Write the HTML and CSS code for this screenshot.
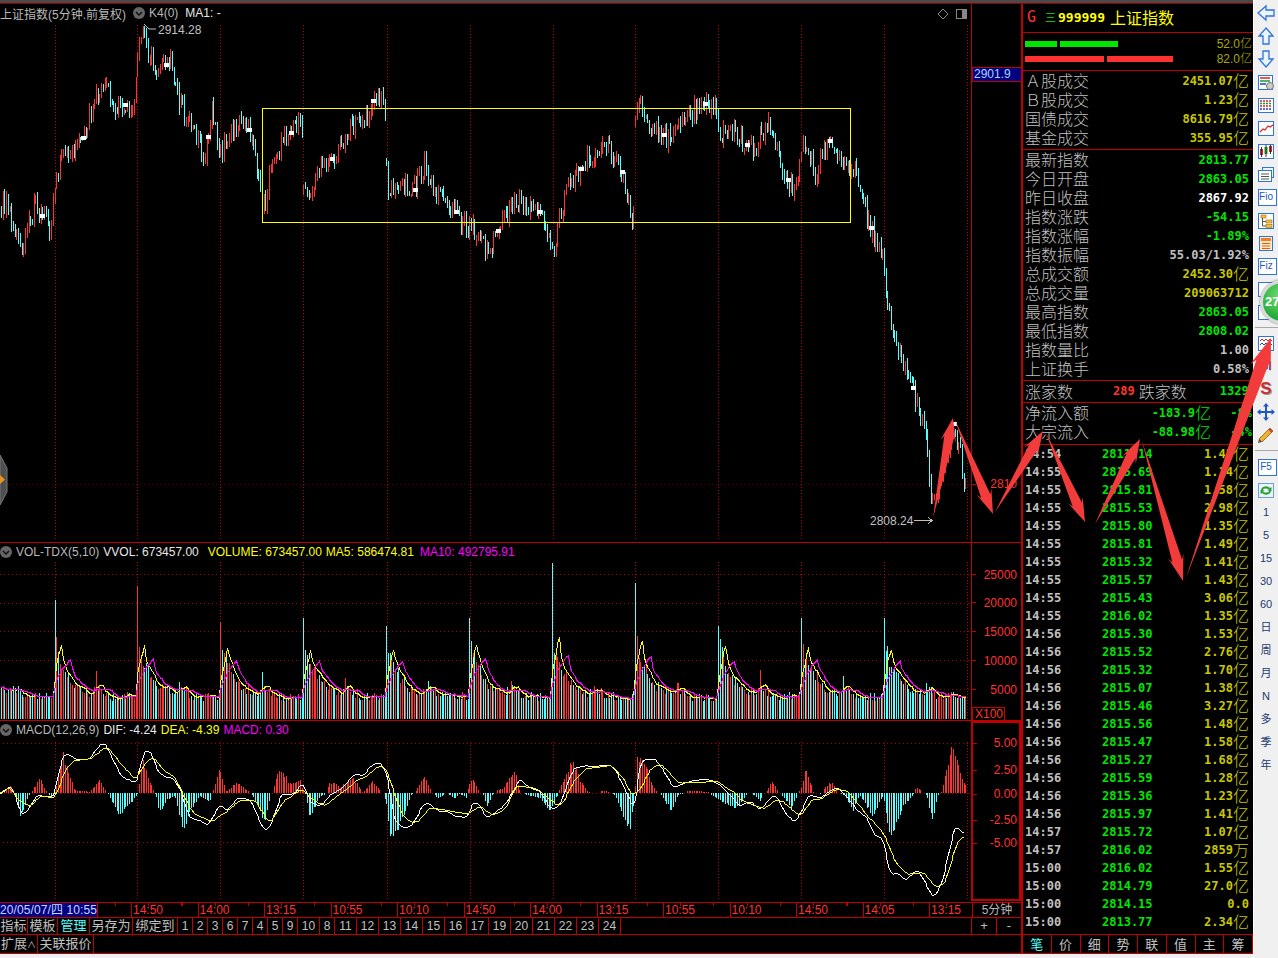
FILE: index.html
```html
<!DOCTYPE html>
<html lang="zh-CN">
<head>
  <meta charset="UTF-8" />
  <title>上证指数</title>
  <link rel="stylesheet" href="styles.css">
</head>
<body>
<div class="app">
  <div class="terminal">
    <div class="top-strip"></div>
    <div class="workspace">

      <!-- K线 / 量 / MACD -->
      <div class="charts">
        <div class="pane pane-price" id="pricePane">
          <div class="pane-head">
            <span class="grey cjk">上证指数(5分钟.前复权)</span>
            <svg class="chevron" viewBox="0 0 12 12"><circle cx="6" cy="6" r="6" fill="#666"/><path d="M3 5l3 3 3-3" fill="none" stroke="#111" stroke-width="1.5"/></svg>
            <span class="grey">K4(0)</span>
            <span class="white">MA1: -</span>
          </div>
        </div>
        <div class="pane pane-vol" id="volPane">
          <div class="pane-head">
            <svg class="chevron" viewBox="0 0 12 12"><circle cx="6" cy="6" r="6" fill="#666"/><path d="M3 5l3 3 3-3" fill="none" stroke="#111" stroke-width="1.5"/></svg>
            <span class="grey">VOL-TDX(5,10)</span>
            <span class="white">VVOL: 673457.00</span>
            <span class="yellow push-5">VOLUME: 673457.00</span>
            <span class="yellow">MA5: 586474.81</span>
            <span class="magenta push-2">MA10: 492795.91</span>
          </div>
        </div>
        <div class="pane pane-macd" id="macdPane">
          <div class="pane-head">
            <svg class="chevron" viewBox="0 0 12 12"><circle cx="6" cy="6" r="6" fill="#666"/><path d="M3 5l3 3 3-3" fill="none" stroke="#111" stroke-width="1.5"/></svg>
            <span class="grey">MACD(12,26,9)</span>
            <span class="white">DIF: -4.24</span>
            <span class="yellow">DEA: -4.39</span>
            <span class="magenta">MACD: 0.30</span>
          </div>
        </div>

        <div class="time-axis">
          <div class="time-now">20/05/07/四 10:55</div>
          <div class="time-gap"></div>
          <div class="time-cell">14:50</div>
          <div class="time-cell">14:00</div>
          <div class="time-cell">13:15</div>
          <div class="time-cell">10:55</div>
          <div class="time-cell">10:10</div>
          <div class="time-cell">14:50</div>
          <div class="time-cell">14:00</div>
          <div class="time-cell">13:15</div>
          <div class="time-cell">10:55</div>
          <div class="time-cell">10:10</div>
          <div class="time-cell">14:50</div>
          <div class="time-cell">14:05</div>
          <div class="time-cell time-last">13:15</div>
          <div class="time-unit">5分钟</div>
        </div>

        <div class="tab-row">
          <span class="tab w28">指标</span>
          <span class="tab w30">模板</span>
          <span class="tab w32 active">管理</span>
          <span class="tab w43">另存为</span>
          <span class="tab w45">绑定到</span>
          <span class="tab n1">1</span><span class="tab n1">2</span><span class="tab n1">3</span><span class="tab n1">6</span><span class="tab n1">7</span><span class="tab n1">4</span><span class="tab n1">5</span><span class="tab n1">9</span>
          <span class="tab n2">10</span><span class="tab n1">8</span>
          <span class="tab n2">11</span><span class="tab n2">12</span><span class="tab n2">13</span><span class="tab n2">14</span><span class="tab n2">15</span><span class="tab n2">16</span><span class="tab n2">17</span><span class="tab n2">19</span><span class="tab n2">20</span><span class="tab n2">21</span><span class="tab n2">22</span><span class="tab n2">23</span><span class="tab n2">24</span>
          <span class="tab-fill"></span>
          <span class="tab-btn">+</span>
          <span class="tab-btn">-</span>
        </div>

        <div class="tab-row tab-row-last">
          <span class="tab w38">扩展<small class="caret">∧</small></span>
          <span class="tab w56">关联报价</span>
        </div>
      </div>

      <!-- 行情 -->
      <div class="quote">
        <div class="q-title">
          <span class="q-g">G</span>
          <span class="q-menu">三</span>
          <span class="q-code">999999</span>
          <span class="q-name">上证指数</span>
        </div>

        <div class="q-bars">
          <div class="bar-row">
            <i class="bar green" style="width:32px"></i><i class="bar green" style="width:58px"></i>
            <span class="bar-val">52.0<i class="unit">亿</i></span>
          </div>
          <div class="bar-row">
            <i class="bar red" style="width:79px"></i><i class="bar red" style="width:66px"></i>
            <span class="bar-val">82.0<i class="unit">亿</i></span>
          </div>
        </div>

        <div class="q-section sec-4">
          <div class="q-row"><span class="lbl">Ａ股成交</span><span class="val c-y">2451.07<i class="unit">亿</i></span></div>
          <div class="q-row"><span class="lbl">Ｂ股成交</span><span class="val c-y">1.23<i class="unit">亿</i></span></div>
          <div class="q-row"><span class="lbl">国债成交</span><span class="val c-y">8616.79<i class="unit">亿</i></span></div>
          <div class="q-row"><span class="lbl">基金成交</span><span class="val c-y">355.95<i class="unit">亿</i></span></div>
        </div>

        <div class="q-section sec-12">
          <div class="q-row"><span class="lbl">最新指数</span><span class="val c-g">2813.77</span></div>
          <div class="q-row"><span class="lbl">今日开盘</span><span class="val c-g">2863.05</span></div>
          <div class="q-row"><span class="lbl">昨日收盘</span><span class="val c-w">2867.92</span></div>
          <div class="q-row"><span class="lbl">指数涨跌</span><span class="val c-g">-54.15</span></div>
          <div class="q-row"><span class="lbl">指数涨幅</span><span class="val c-g">-1.89%</span></div>
          <div class="q-row"><span class="lbl">指数振幅</span><span class="val c-s">55.03/1.92%</span></div>
          <div class="q-row"><span class="lbl">总成交额</span><span class="val c-y">2452.30<i class="unit">亿</i></span></div>
          <div class="q-row"><span class="lbl">总成交量</span><span class="val c-y">209063712</span></div>
          <div class="q-row"><span class="lbl">最高指数</span><span class="val c-g">2863.05</span></div>
          <div class="q-row"><span class="lbl">最低指数</span><span class="val c-g">2808.02</span></div>
          <div class="q-row"><span class="lbl">指数量比</span><span class="val c-s">1.00</span></div>
          <div class="q-row"><span class="lbl">上证换手</span><span class="val c-s">0.58%</span></div>
        </div>

        <div class="q-section sec-updown">
          <span class="lbl">涨家数</span>
          <span class="val c-r updown-up">289</span>
          <span class="lbl updown-lbl">跌家数</span>
          <span class="val c-g updown-down">1329</span>
        </div>

        <div class="q-section sec-flow">
          <div class="q-row"><span class="lbl">净流入额</span><span class="flow"><span class="val c-g">-183.9<i class="unit">亿</i></span><span class="val c-g flow-pct">-8%</span></span></div>
          <div class="q-row"><span class="lbl">大宗流入</span><span class="flow"><span class="val c-g">-88.98<i class="unit">亿</i></span><span class="val c-g flow-pct">-4%</span></span></div>
        </div>

        <div class="ticks">
          <div class="tick"><span>14:54</span><span>2811.14</span><span>1.45<i class="unit">亿</i></span></div>
          <div class="tick"><span>14:55</span><span>2815.69</span><span>1.14<i class="unit">亿</i></span></div>
          <div class="tick"><span>14:55</span><span>2815.81</span><span>1.58<i class="unit">亿</i></span></div>
          <div class="tick"><span>14:55</span><span>2815.53</span><span>2.98<i class="unit">亿</i></span></div>
          <div class="tick"><span>14:55</span><span>2815.80</span><span>1.35<i class="unit">亿</i></span></div>
          <div class="tick"><span>14:55</span><span>2815.81</span><span>1.49<i class="unit">亿</i></span></div>
          <div class="tick"><span>14:55</span><span>2815.32</span><span>1.41<i class="unit">亿</i></span></div>
          <div class="tick"><span>14:55</span><span>2815.57</span><span>1.43<i class="unit">亿</i></span></div>
          <div class="tick"><span>14:55</span><span>2815.43</span><span>3.06<i class="unit">亿</i></span></div>
          <div class="tick"><span>14:55</span><span>2816.02</span><span>1.35<i class="unit">亿</i></span></div>
          <div class="tick"><span>14:56</span><span>2815.30</span><span>1.53<i class="unit">亿</i></span></div>
          <div class="tick"><span>14:56</span><span>2815.52</span><span>2.76<i class="unit">亿</i></span></div>
          <div class="tick"><span>14:56</span><span>2815.32</span><span>1.70<i class="unit">亿</i></span></div>
          <div class="tick"><span>14:56</span><span>2815.07</span><span>1.38<i class="unit">亿</i></span></div>
          <div class="tick"><span>14:56</span><span>2815.46</span><span>3.27<i class="unit">亿</i></span></div>
          <div class="tick"><span>14:56</span><span>2815.56</span><span>1.48<i class="unit">亿</i></span></div>
          <div class="tick"><span>14:56</span><span>2815.47</span><span>1.58<i class="unit">亿</i></span></div>
          <div class="tick"><span>14:56</span><span>2815.27</span><span>1.68<i class="unit">亿</i></span></div>
          <div class="tick"><span>14:56</span><span>2815.59</span><span>1.28<i class="unit">亿</i></span></div>
          <div class="tick"><span>14:56</span><span>2815.36</span><span>1.23<i class="unit">亿</i></span></div>
          <div class="tick"><span>14:56</span><span>2815.97</span><span>1.41<i class="unit">亿</i></span></div>
          <div class="tick"><span>14:57</span><span>2815.72</span><span>1.07<i class="unit">亿</i></span></div>
          <div class="tick"><span>14:57</span><span>2816.02</span><span>2859<i class="unit">万</i></span></div>
          <div class="tick"><span>15:00</span><span>2816.02</span><span>1.55<i class="unit">亿</i></span></div>
          <div class="tick"><span>15:00</span><span>2814.79</span><span>27.0<i class="unit">亿</i></span></div>
          <div class="tick"><span>15:00</span><span>2814.15</span><span>0.0</span></div>
          <div class="tick"><span>15:00</span><span>2813.77</span><span>2.34<i class="unit">亿</i></span></div>
        </div>

        <div class="q-tabs">
          <span class="q-tab active">笔</span><span class="q-tab">价</span><span class="q-tab">细</span><span class="q-tab">势</span><span class="q-tab">联</span><span class="q-tab">值</span><span class="q-tab">主</span><span class="q-tab">筹</span>
        </div>
      </div>
    </div>
  </div>

  <!-- 右侧工具栏 -->
  <div class="tools">
    <div class="tool"><svg viewBox="0 0 20 20"><path d="M2 10l8-7v4h8v6h-8v4z" fill="#eaf4ff" stroke="#2f74d8" stroke-width="1.3"/></svg></div>
    <div class="tool"><svg viewBox="0 0 20 20"><path d="M10 2l7 8h-4v8H7v-8H3z" fill="#eaf4ff" stroke="#2f74d8" stroke-width="1.3"/></svg></div>
    <div class="tool"><svg viewBox="0 0 20 20"><path d="M10 18l7-8h-4V2H7v8H3z" fill="#eaf4ff" stroke="#2f74d8" stroke-width="1.3"/></svg></div>
    <div class="tool"><svg viewBox="0 0 20 20"><rect x="2.5" y="3.5" width="14" height="14" fill="#fff" stroke="#2f74d8"/><path d="M4 6h10" stroke="#e02020" stroke-width="1.5"/><path d="M4 9h10" stroke="#10a030" stroke-width="1.5"/><path d="M4 12h6" stroke="#2040d0" stroke-width="1.5"/><circle cx="14" cy="14" r="3.5" fill="#ccc" stroke="#777"/></svg></div>
    <div class="tool"><svg viewBox="0 0 20 20"><rect x="2.5" y="3.5" width="15" height="14" fill="#fff" stroke="#2f74d8"/><path d="M4 6h12M4 11h12" stroke="#e02020" stroke-width="1.5" stroke-dasharray="2 1"/><path d="M4 8.5h12" stroke="#10a030" stroke-width="1.5" stroke-dasharray="2 1"/><path d="M4 14h12" stroke="#2040d0" stroke-width="1.5" stroke-dasharray="2 1"/></svg></div>
    <div class="tool"><svg viewBox="0 0 20 20"><rect x="2.5" y="3.5" width="15" height="14" fill="#fff" stroke="#2f74d8"/><path d="M4 14l3-3 2 1 3-4 2 1 3-2" fill="none" stroke="#e02020" stroke-width="1.2"/></svg></div>
    <div class="tool"><svg viewBox="0 0 20 20"><rect x="2.5" y="3.5" width="15" height="14" fill="#fff" stroke="#2f74d8"/><rect x="4" y="8" width="3" height="6" fill="#e02020"/><rect x="8.5" y="6" width="3" height="7" fill="#10a030"/><rect x="13" y="5" width="3" height="6" fill="#e02020"/><path d="M5.5 6v10M10 4v12M14.5 4v9" stroke="#333"/></svg></div>
    <div class="tool"><svg viewBox="0 0 20 20"><rect x="6.5" y="3.5" width="11" height="10" fill="#eaf4ff" stroke="#2f74d8"/><rect x="2.5" y="6.5" width="13" height="11" fill="#fff" stroke="#2f74d8"/><path d="M5 10h8M5 12.5h8M5 15h8" stroke="#555"/></svg></div>
    <div class="tool tool-box">Fio</div>
    <div class="tool"><svg viewBox="0 0 20 20"><rect x="2.5" y="3.5" width="15" height="15" fill="#fff" stroke="#2f74d8"/><rect x="5" y="5" width="5" height="3" fill="#f0c040" stroke="#a07000" stroke-width=".6"/><rect x="10" y="10" width="6" height="3" fill="#f0c040" stroke="#a07000" stroke-width=".6"/><rect x="10" y="14.5" width="6" height="3" fill="#f0c040" stroke="#a07000" stroke-width=".6"/><path d="M6.5 8v8h3.5M6.5 11.5h3.5" fill="none" stroke="#555"/></svg></div>
    <div class="tool"><svg viewBox="0 0 20 20"><rect x="3.5" y="3.5" width="13" height="14" fill="#ffe8c8" stroke="#2f74d8"/><rect x="5" y="5" width="10" height="3" fill="#f08020"/><path d="M6 10.5h8M6 13h8M6 15.5h8" stroke="#e06010"/></svg></div>
    <div class="tool tool-box">Fiz</div>
    <div class="tool"><svg viewBox="0 0 20 20"><rect x="2.5" y="3.5" width="15" height="14" fill="#fff" stroke="#2f74d8"/></svg></div>
    <div class="tool"><svg viewBox="0 0 20 20"><rect x="2.5" y="3.5" width="15" height="14" fill="#fff" stroke="#2f74d8"/></svg></div>
    <div class="tool-sep sep-a"></div>
    <div class="tool"><svg viewBox="0 0 20 20"><rect x="2.5" y="3.5" width="15" height="14" fill="#fff" stroke="#2f74d8"/><path d="M4 8l2-2 2 2 2-2 2 2 2-2 2 2" fill="none" stroke="#e02020"/><path d="M4 12l2-2 2 2 2-2 2 2 2-2 2 2" fill="none" stroke="#2040d0"/></svg></div>
    <div class="tool tool-si">SI</div>
    <div class="tool tool-s">S</div>
    <div class="tool"><svg viewBox="0 0 20 20"><path d="M10 1l3 3.5h-2V9h4.500V7l3.500 3-3.500 3v-2H11v4.500h2L10 19l-3-3.500h2V11H4.500v2L1 10l3.500-3v2H9V4.500H7z" fill="#1c58c8"/></svg></div>
    <div class="tool"><svg viewBox="0 0 20 20"><path d="M3 14L14 3l3 3L6 17z" fill="#f0b030" stroke="#8a5a10" stroke-width=".8"/><path d="M3 14l-1 4 4-1z" fill="#555"/><path d="M13 4l3 3" stroke="#d04040" stroke-width="2"/></svg></div>
    <div class="tool-sep sep-b"></div>
    <div class="tool tool-box">F5</div>
    <div class="tool"><svg viewBox="0 0 20 20"><rect x="2.500" y="3.500" width="15" height="14" fill="#e8f4ff" stroke="#6aa0e0"/><path d="M5 10a5 4 0 0 1 9-2l1.500-1v4h-4l1.500-1a3 2 0 0 0-6 1zM15 11a5 4 0 0 1-9 2l-1.500 1v-4h4L7 11a3 2 0 0 0 6-1z" fill="#30a030"/></svg></div>
    <div class="tool-text">1</div>
    <div class="tool-text">5</div>
    <div class="tool-text">15</div>
    <div class="tool-text">30</div>
    <div class="tool-text">60</div>
    <div class="tool-text">日</div>
    <div class="tool-text">周</div>
    <div class="tool-text">月</div>
    <div class="tool-text">N</div>
    <div class="tool-text">多</div>
    <div class="tool-text">季</div>
    <div class="tool-text">年</div>
    <div class="ball">27</div>
  </div>

  <!-- 手工标注的箭头 -->
  <svg class="marks" id="marks" width="1278" height="958" viewBox="0 0 1278 958"></svg>
</div>
<script src="chart.js"></script>
</body>
</html>
```

FILE: styles.css
```css
* {
  box-sizing: border-box;
}
html, body {
  margin: 0;
  height: 100%;
  overflow: hidden;
}
body {
  background: #f0f0f0;
  font-family: "Liberation Sans", "Noto Sans CJK SC", sans-serif;
  font-size: 12px;
  color: #c0c0c0;
}
.app {
  position: relative;
  display: flex;
  width: 1278px;
  height: 958px;
}
.terminal {
  width: 1253px;
  height: 954px;
  display: flex;
  flex-direction: column;
  background: #000;
}
.top-strip {
  height: 4px;
  background: #4a4a4a;
  border-bottom: 1px solid #900000;
}
.workspace {
  flex: 1;
  min-height: 0;
  display: flex;
  border-bottom: 1px solid #c00000;
}

/* Charts */
.charts {
  width: 1023px;
  display: flex;
  flex-direction: column;
  border-right: 2px solid #c00000;
}
.pane {
  position: relative;
  overflow: hidden;
}
.pane-price {
  height: 539px;
  border-bottom: 1px solid #c00000;
}
.pane-vol {
  height: 178px;
  border-bottom: 1px solid #c00000;
}
.pane-macd {
  height: 181px;
}
.pane svg.plot {
  position: absolute;
  left: 0;
  top: 0;
  width: 1021px;
  height: 100%;
  shape-rendering: crispEdges;
}
.pane svg.plot text {
  font-family: "Liberation Sans", "Noto Sans CJK SC", sans-serif;
  font-size: 12px;
}
.pane-head {
  position: relative;
  z-index: 1;
  display: flex;
  align-items: center;
  gap: 4px;
  height: 16px;
  margin-top: 1px;
  white-space: nowrap;
}
.pane-price .pane-head {
  margin-top: 0;
  gap: 7px;
  height: 18px;
}
.chevron {
  width: 12px;
  height: 12px;
  flex: none;
}
.pane-price .chevron {
  margin-right: -3px;
}
.push-5 {
  margin-left: 5px;
}
.push-2 {
  margin-left: 2px;
}
.grey {
  color: #b8b8b8;
}
.white {
  color: #e8e8e8;
}
.yellow {
  color: #ffff00;
}
.magenta {
  color: #ff00ff;
}

/* Time axis */
.time-axis {
  position: relative;
  display: flex;
  height: 16px;
  border-top: 1px solid #c00000;
  border-bottom: 1px solid #c00000;
  color: #ff3232;
  line-height: 15px;
  background: repeating-linear-gradient(90deg, #c00000 0 1px, transparent 1px 33.25px) 115px 0 / 100% 3px no-repeat;
}
.time-now {
  width: 97px;
  background: #000080;
  color: #c8d8ff;
  white-space: nowrap;
  letter-spacing: 0.1px;
}
.time-gap {
  width: 34px;
  border-left: 1px solid #c00000;
}
.time-cell {
  width: 66.5px;
  padding-left: 1px;
  border-left: 1px solid #c00000;
}
.time-last {
  width: 43px;
}
.time-unit {
  flex: 1;
  text-align: center;
  background: #000;
  color: #b8b8b8;
  border-left: 1px solid #c00000;
}

/* Bottom tabs */
.tab-row {
  display: flex;
  height: 17px;
  border-bottom: 1px solid #c00000;
  line-height: 16px;
  font-size: 13px;
  color: #c0c0c0;
}
.tab-row-last {
  flex: 1;
  border-bottom: none;
  line-height: 17px;
}
.tab {
  text-align: center;
  border-right: 1px solid #c00000;
  white-space: nowrap;
}
.tab.active {
  color: #54ffff;
}
.caret {
  font-size: 9px;
}
.w28 { width: 28px; }
.w30 { width: 30px; }
.w32 { width: 32px; }
.w38 { width: 38px; }
.w43 { width: 43px; }
.w45 { width: 45px; }
.w56 { width: 56px; }
.n1 { width: 15px; font-size: 12px; }
.n2 { width: 22px; font-size: 12px; }
.tab-fill {
  flex: 1;
}
.tab-btn {
  width: 25px;
  text-align: center;
  border-left: 1px solid #c00000;
}

/* Quote panel */
.quote {
  width: 230px;
  display: flex;
  flex-direction: column;
  overflow: hidden;
}
.lbl {
  font-size: 16px;
  color: #c0c0c0;
  font-weight: 300;
}
.val {
  font-family: "DejaVu Sans Mono", "Noto Sans CJK SC", monospace;
  font-size: 12px;
  font-weight: bold;
}
.unit {
  display: inline-block;
  height: 16px;
  line-height: 16px;
  vertical-align: -2px;
  font-family: "Noto Sans CJK SC", sans-serif;
  font-style: normal;
  font-weight: 300;
  font-size: 16px;
}
.c-y { color: #c8c800; }
.c-g { color: #00e600; }
.c-w { color: #ffffff; }
.c-s { color: #c0c0c0; }
.c-r { color: #ff3232; }

.q-title {
  height: 29px;
  display: flex;
  align-items: center;
  padding: 0 0 2px 4px;
  border-bottom: 1px solid #c00000;
}
.q-g {
  color: #ff3232;
  font-family: "DejaVu Sans Mono", monospace;
  font-size: 15px;
  width: 18px;
}
.q-menu {
  color: #00e600;
  font-size: 11px;
  width: 13px;
}
.q-code {
  color: #ffff00;
  font-family: "DejaVu Sans Mono", monospace;
  font-size: 13px;
  font-weight: bold;
  margin-right: 5px;
}
.q-name {
  color: #ffff00;
  font-size: 16px;
}
.q-bars {
  height: 38px;
  padding: 4px 1px 0 2px;
  border-bottom: 1px solid #c00000;
}
.bar-row {
  display: flex;
  align-items: flex-start;
  gap: 3px;
  height: 15px;
}
.bar {
  height: 6px;
  margin-top: 4px;
}
.bar.green {
  background: #00e600;
}
.bar.red {
  background: #ff3232;
}
.bar-val {
  margin-left: auto;
  color: #a8a800;
  line-height: 15px;
}
.bar-val .unit {
  font-size: 12px;
  vertical-align: 0;
  height: 12px;
  line-height: 12px;
}
.q-section {
  padding-bottom: 2px;
  border-bottom: 1px solid #c00000;
}
.q-row {
  display: flex;
  justify-content: space-between;
  align-items: center;
  height: 19px;
  padding: 0 4px 0 2px;
  white-space: nowrap;
}
.q-row .lbl {
  line-height: 19px;
  padding-top: 2px;
}
.q-row .val {
  line-height: 19px;
  padding-top: 2px;
}
.sec-updown {
  height: 22px;
  padding: 0 0 2px 2px;
  display: flex;
  align-items: center;
  white-space: nowrap;
}
.updown-up {
  margin-left: 40px;
}
.updown-lbl {
  margin-left: 4px;
}
.updown-down {
  margin-left: 33px;
}
.sec-flow {
  padding-bottom: 3px;
}
.flow {
  display: flex;
  align-items: center;
}
.flow-pct {
  width: 41px;
  text-align: right;
  margin-right: -3px;
}

.ticks {
  flex: 1;
}
.tick {
  display: grid;
  grid-template-columns: 77px 1fr auto;
  height: 18px;
  line-height: 18px;
  padding: 0 4px 0 2px;
  font-family: "DejaVu Sans Mono", "Noto Sans CJK SC", monospace;
  font-size: 12px;
  font-weight: bold;
}
.tick span {
  height: 18px;
  overflow: visible;
}
.tick span:nth-child(1) { color: #c0c0c0; }
.tick span:nth-child(2) { color: #00e600; }
.tick span:nth-child(3) { color: #c8c800; }
.q-tabs {
  display: flex;
  height: 19px;
  border-top: 1px solid #c00000;
}
.q-tab {
  flex: 1;
  text-align: center;
  font-size: 13px;
  line-height: 19px;
  color: #c0c0c0;
  border-right: 1px solid #c00000;
}
.q-tab.active {
  color: #54ffff;
}

/* Tool column */
.tools {
  position: relative;
  width: 25px;
  height: 958px;
  background: #f0f0f0;
  border-left: 1px solid #fff;
  display: flex;
  flex-direction: column;
  align-items: center;
  padding-top: 1px;
}
.tool {
  width: 23px;
  height: 23px;
  flex: none;
  display: flex;
  align-items: center;
  justify-content: center;
}
.tool svg {
  width: 20px;
  height: 20px;
}
.tool-box {
  position: relative;
  z-index: 0;
  color: #1c58c8;
  font-size: 10px;
  line-height: 14px;
}
.tool-box::before {
  content: "";
  position: absolute;
  left: 3px;
  top: 4px;
  width: 17px;
  height: 15px;
  border: 1px solid #2f74d8;
  background: #fff;
  z-index: -1;
}
.tool-si {
  color: #1c40d8;
  font-size: 12px;
  font-weight: bold;
}
.tool-s {
  color: #c83030;
  font-size: 17px;
  font-weight: bold;
  text-shadow: 1px 1px 0 #999;
}
.tool-sep {
  width: 23px;
  flex: none;
  position: relative;
}
.tool-sep::after {
  content: "";
  position: absolute;
  left: 0;
  right: 0;
  top: 4px;
  border-top: 1px solid #a8a8a8;
}
.sep-a { height: 8px; }
.sep-b { height: 9px; }
.tool-text {
  width: 23px;
  height: 23px;
  flex: none;
  text-align: center;
  line-height: 23px;
  color: #1c3a70;
  font-size: 11px;
}
.ball {
  position: absolute;
  left: 6px;
  top: 280px;
  width: 44px;
  height: 44px;
  border-radius: 50%;
  border: 3px solid #d8d8d8;
  background: radial-gradient(circle at 45% 35%, #70e070, #20a838 70%, #188a30);
  color: #fff;
  font-size: 13px;
  font-weight: bold;
  line-height: 38px;
  padding-left: 2px;
  box-shadow: 0 0 2px #555;
}

/* Arrow marks */
.marks {
  position: absolute;
  left: 0;
  top: 0;
  pointer-events: none;
  z-index: 5;
}
```

FILE: chart.js
```js
// 画K线、成交量和MACD. 坐标都是截图上的像素
const NS = 'http://www.w3.org/2000/svg';
const RED = '#ff3232';
const CYAN = '#54ffff';
const LINE = '#c00000';

let seed = 20200507;
function rnd() {
  seed = (seed * 1664525 + 1013904223) % 4294967296;
  return seed / 4294967296;
}

function el(parent, name, attrs, text) {
  const e = document.createElementNS(NS, name);
  for (const k in attrs) e.setAttribute(k, attrs[k]);
  if (text) e.textContent = text;
  parent.appendChild(e);
  return e;
}

function makePlot(id, top, height) {
  const pane = document.getElementById(id);
  const svg = document.createElementNS(NS, 'svg');
  svg.setAttribute('class', 'plot');
  svg.setAttribute('viewBox', '0 ' + top + ' 1021 ' + height);
  pane.insertBefore(svg, pane.firstChild);
  return svg;
}

function interp(pts, x) {
  if (x <= pts[0][0]) return pts[0][1];
  for (let i = 1; i < pts.length; i++) {
    if (x <= pts[i][0]) {
      const a = pts[i - 1], b = pts[i];
      return a[1] + (b[1] - a[1]) * (x - a[0]) / (b[0] - a[0] || 1);
    }
  }
  return pts[pts.length - 1][1];
}

const BARS = 559;
const FIRST_DAY = 31;
const barX = i => Math.round(54.5 + (i - FIRST_DAY) * 1.7282) + 0.5;
const DAY_X = [55, 137, 220, 303, 387, 470, 553, 635, 718, 801, 884, 967];

// ---- 价格 ----
const PRICE = [
  [0,210],[8,200],[15,235],[22,252],[35,205],[50,230],[56,180],[65,150],[80,145],[95,100],[105,78],[112,105],[125,105],[135,110],[137,62],[142,32],
  [150,60],[160,70],[172,58],[178,100],[195,130],[205,155],[212,105],[220,155],[235,125],[250,130],[258,170],[263,215],[270,170],[285,138],[300,125],[302,125],
  [304,198],[320,170],[335,155],[350,128],[365,120],[375,95],[385,100],[387,185],[400,185],[415,190],[425,165],[435,195],[450,205],[465,225],[480,235],[488,255],
  [500,225],[515,205],[535,205],[545,225],[553,258],[565,195],[580,170],[605,142],[620,165],[632,218],[634,218],[636,98],[650,125],[670,140],[685,120],[700,105],[715,102],
  [718,138],[735,130],[750,150],[770,125],[785,175],[795,195],[803,135],[815,175],[830,140],[848,165],[860,180],[868,222],[880,250],[884,262],[886,300],[893,330],[905,368],
  [915,395],[925,425],[933,510],[945,465],[953,422],[960,450],[965,488]
];

const price = makePlot('pricePane', 4, 538);
const candles = [];
(function drawPrice() {
  el(price, 'path', { d: 'M0 484.5H972', stroke: '#600000', 'stroke-dasharray': '1 3', fill: 'none' });
  DAY_X.forEach(x => el(price, 'path', { d: 'M' + (x + .5) + ' 25V541', stroke: LINE, 'stroke-dasharray': '1 2', fill: 'none' }));

  let up = '', down = '';
  let prev = interp(PRICE, barX(0));
  const dots = [];
  for (let i = 0; i < BARS; i++) {
    const x = barX(i);
    const c = interp(PRICE, x) + (rnd() - .5) * 20;
    const o = Math.abs(c - prev) > 32 ? c + (rnd() - .5) * 18 : prev;
    const hi = Math.max(26, Math.min(o, c) - rnd() * 7);
    const lo = Math.min(517, Math.max(o, c) + rnd() * 7);
    const isUp = c < o;
    candles.push(isUp);
    const s = 'M' + x + ' ' + Math.round(hi) + 'V' + Math.round(Math.max(lo, hi + 3));
    if (isUp) up += s; else down += s;
    if ((i - 23) % 24 === 0) dots.push([x, Math.round(interp(PRICE, x))]);
    prev = c;
  }
  el(price, 'path', { d: up, stroke: RED, fill: 'none' });
  el(price, 'path', { d: down, stroke: CYAN, fill: 'none' });
  dots.forEach(d => el(price, 'rect', { x: d[0] - 2, y: d[1] - 2, width: 5, height: 4, fill: '#fff' }));

  // 框
  el(price, 'rect', { x: 262.5, y: 108.5, width: 588, height: 114, fill: 'none', stroke: '#ffff00' });

  // 最高 最低 标注
  el(price, 'path', { d: 'M144 24l5 5h7', fill: 'none', stroke: '#c0c0c0', 'shape-rendering': 'auto' });
  el(price, 'text', { x: 158, y: 34, fill: '#c0c0c0' }, '2914.28');
  el(price, 'text', { x: 870, y: 525, fill: '#c0c0c0' }, '2808.24');
  el(price, 'path', { d: 'M914 520.5H932M928 517l4 3.500-4 3.500', fill: 'none', stroke: '#c0c0c0' });

  // 右上小图标
  el(price, 'path', { d: 'M943 9l5 5-5 5-5-5z', fill: 'none', stroke: '#888', 'shape-rendering': 'auto' });
  el(price, 'rect', { x: 956.5, y: 9.5, width: 10, height: 9, fill: 'none', stroke: '#888' });
  el(price, 'rect', { x: 962, y: 10, width: 4, height: 8, fill: '#888' });

  // 左边的隐藏按钮
  el(price, 'path', { d: 'M0 455L7 468V492L0 505Z', fill: '#4e4e4e', stroke: '#777', 'shape-rendering': 'auto' });
  el(price, 'path', { d: 'M0 475l5 4.500-5 4.500z', fill: '#e89020', 'shape-rendering': 'auto' });

  // 坐标轴
  el(price, 'path', { d: 'M971.5 4V542', stroke: LINE, fill: 'none' });
  el(price, 'path', { d: 'M972 484.5H976', stroke: LINE, fill: 'none' });
  el(price, 'rect', { x: 972, y: 67, width: 49, height: 14, fill: '#000080', stroke: LINE });
  el(price, 'text', { x: 974, y: 78, fill: '#a8d8ff' }, '2901.9');
  el(price, 'text', { x: 1017, y: 488, fill: RED, 'text-anchor': 'end' }, '2810');
})();

// ---- 成交量 ----
const vol = makePlot('volPane', 543, 177);
(function drawVolume() {
  [574.5, 603.5, 631.5, 660.5, 689.5].forEach(y =>
    el(vol, 'path', { d: 'M0 ' + y + 'H972', stroke: '#a00000', 'stroke-dasharray': '1 3', fill: 'none' }));
  DAY_X.forEach(x => el(vol, 'path', { d: 'M' + (x + .5) + ' 562V719', stroke: LINE, 'stroke-dasharray': '1 2', fill: 'none' }));

  const spikes = [119, 133, 97, 101, 93, 101, 156, 136, 93, 101, 101, 39];
  const spikeUp = [false, true, true];
  const data = [];
  let up = '', down = '';
  for (let i = 0; i < BARS; i++) {
    const n = i - FIRST_DAY;
    const t = ((n % 48) + 48) % 48;
    const day = Math.floor(n / 48);
    let v = 18 + rnd() * 9;
    if (t < 26) v += 58 * Math.exp(-t / 7.5) * (.8 + rnd() * .35);
    if (t > 21 && t < 34) v += 7 * Math.exp(-(t - 26) * (t - 26) / 12);
    if (t === 24) v += rnd() * 16;
    let isUp = candles[i];
    if (t === 0 && day >= 0) {
      v = spikes[day];
      isUp = !!spikeUp[day];
    }
    data.push(v);
    const s = 'M' + barX(i) + ' 719V' + Math.round(719 - v);
    if (isUp) up += s; else down += s;
  }
  el(vol, 'path', { d: up, stroke: RED, fill: 'none' });
  el(vol, 'path', { d: down, stroke: CYAN, fill: 'none' });

  function ma(span, color) {
    const pts = [];
    for (let i = 0; i < BARS; i++) {
      let sum = 0, c = 0;
      for (let k = Math.max(0, i - span + 1); k <= i; k++) { sum += data[k]; c++; }
      pts.push(barX(i) + ',' + Math.round(719 - sum / c));
    }
    el(vol, 'polyline', { points: pts.join(' '), fill: 'none', stroke: color });
  }
  ma(5, '#ffff00');
  ma(10, '#ff00ff');

  el(vol, 'path', { d: 'M971.5 543V720', stroke: LINE, fill: 'none' });
  [[25000, 575], [20000, 603], [15000, 632], [10000, 661], [5000, 690]].forEach(r => {
    el(vol, 'path', { d: 'M972 ' + (r[1] - .5) + 'H976', stroke: LINE, fill: 'none' });
    el(vol, 'text', { x: 1017, y: r[1] + 4, fill: RED, 'text-anchor': 'end' }, String(r[0]));
  });
  el(vol, 'rect', { x: 972.5, y: 707.5, width: 32, height: 13, fill: '#000', stroke: LINE });
  el(vol, 'text', { x: 975, y: 718, fill: RED }, 'X100');
})();

// ---- MACD ----
function seg(off, z) {
  const out = [];
  for (let k = 0; k < z.length; k += 2) out.push([off + z[k] / 3, 720 + z[k + 1] / 3]);
  return out;
}

// 折线重采样后做两次平滑
function smooth(pts) {
  let ys = [];
  const xs = [];
  for (let x = pts[0][0]; x <= pts[pts.length - 1][0]; x += 1.73) {
    xs.push(x);
    ys.push(interp(pts, x));
  }
  for (let pass = 0; pass < 2; pass++) {
    ys = ys.map((y, i) => {
      const a = ys[Math.max(0, i - 1)], b = ys[Math.min(ys.length - 1, i + 1)];
      return (a + y + b) / 3;
    });
  }
  return xs.map((x, i) => Math.round(x) + ',' + Math.round(ys[i])).join(' ');
}

const DIF = seg(0, [0,220,15,215,30,192,45,225,65,285,85,270,110,225,150,230,165,225,175,160,190,105,200,100,230,118,270,118,290,85,312,65,335,110,365,170,390,180,412,190,430,95,450,92,480,165,520,175,545,215,565,290,600,302,625,318,660,250,680,275,715,232,750,238,775,290,795,338,815,310,845,220,880,225,910,185,930,245,960,260,990,225,1015,212])
  .concat(seg(340, [0,210,20,190,45,162,55,160,70,172,90,140,110,127,130,135,145,180,160,290,175,315,205,325,225,305,245,260,262,245,290,272,320,272,340,287,385,292,395,250,415,245,440,297,460,280,490,262,525,205,540,172,560,200,600,212,635,270,660,255,700,145,740,135,760,140,800,132,825,145,860,220,885,270,900,125,920,118,945,115,970,150,1000,205,1015,195]))
  .concat(seg(640, [120,195,150,183,200,175,235,190,285,240,300,262,330,240,360,272,385,240,405,222,440,285,465,307,490,265,505,222,540,235,590,200,625,235,655,275,680,290,705,350,730,352,750,465,775,458,795,482,835,448,880,535,905,495,945,315,975,345]));

const DEA = seg(0, [0,220,30,200,50,235,90,260,125,225,165,235,195,150,225,120,275,115,320,78,370,140,410,180,430,135,460,110,490,150,525,170,550,225,580,280,635,305,680,275,720,240,765,240,810,310,850,245,880,225,905,205,940,240,975,258,1015,225])
  .concat(seg(340, [0,222,30,200,55,177,80,170,115,138,135,140,150,180,165,225,190,290,215,307,235,305,270,262,320,270,385,282,420,258,455,285,495,270,530,195,590,205,650,255,670,250,700,185,740,145,815,135,850,175,875,225,900,210,930,150,960,130,990,160,1015,188]))
  .concat(seg(640, [120,188,150,187,230,183,285,220,310,245,375,265,410,238,430,245,480,290,520,235,545,237,590,205,625,215,660,260,690,295,735,345,765,425,800,462,850,456,890,503,915,490,950,370,975,345]));

const HIST = seg(0, [0,220,15,215,30,195,44,215,46,225,62,290,88,225,96,215,120,175,140,215,155,232,165,225,172,180,190,105,205,150,225,210,270,215,300,180,320,218,328,225,360,290,412,225,416,210,430,125,462,215,468,225,480,280,500,240,525,228,550,325,580,260,600,228,630,245,638,218,660,152,680,215,710,187,750,215,758,225,795,305,812,225,818,215,840,140,870,190,900,180,912,215,918,225,930,290,960,230,975,225,980,215,990,187,1015,195])
  .concat(seg(340, [0,205,35,170,55,195,70,218,100,182,125,218,135,225,155,365,190,300,215,225,228,215,255,165,275,218,285,225,295,235,320,218,335,230,345,235,360,222,380,235,388,195,400,178,420,218,430,225,442,260,458,225,470,212,490,205,525,145,540,215,560,225,600,235,630,275,645,245,655,220,665,195,700,120,720,180,745,215,770,220,795,210,815,220,825,225,870,335,885,225,892,110,915,125,930,180,950,215,965,225,995,275,1015,225]))
  .concat(seg(640, [130,222,145,212,205,215,215,225,255,250,290,265,325,218,345,225,360,245,370,222,380,218,395,180,415,215,425,225,455,265,475,222,485,200,500,145,520,215,545,225,560,195,575,185,595,220,615,225,640,270,660,225,700,290,730,225,750,355,790,260,820,225,830,200,850,220,860,225,878,300,895,225,905,215,940,70,970,180,990,220]));

const macd = makePlot('macdPane', 721, 181);
(function drawMacd() {
  [743.5, 842.5].forEach(y =>
    el(macd, 'path', { d: 'M3 ' + y + 'H972', stroke: '#a00000', 'stroke-dasharray': '1 3', fill: 'none' }));
  el(macd, 'path', { d: 'M0 793.5H972', stroke: '#a00000', 'stroke-dasharray': '1 3', fill: 'none' });
  DAY_X.forEach(x => el(macd, 'path', { d: 'M' + (x + .5) + ' 742V900', stroke: LINE, 'stroke-dasharray': '1 2', fill: 'none' }));

  let up = '', down = '';
  const zero = 793;
  for (let i = 0; i < BARS; i++) {
    const x = barX(i);
    const y = interp(HIST, x);
    const v = (y - zero) * (.85 + rnd() * .25);
    if (Math.abs(v) < 1) continue;
    const s = 'M' + x + ' ' + zero + 'V' + Math.round(zero + v);
    if (v < 0) up += s; else down += s;
  }
  el(macd, 'path', { d: up, stroke: RED, fill: 'none' });
  el(macd, 'path', { d: down, stroke: CYAN, fill: 'none' });
  el(macd, 'polyline', { points: smooth(DIF), fill: 'none', stroke: '#ffffff' });
  el(macd, 'polyline', { points: smooth(DEA), fill: 'none', stroke: '#ffff00' });

  el(macd, 'rect', { x: 972, y: 722, width: 48, height: 178, fill: '#000', stroke: LINE, 'stroke-width': 2 });
  [['5.00', 743], ['2.50', 770], ['0.00', 794], ['-2.50', 820], ['-5.00', 843]].forEach(r => {
    el(macd, 'path', { d: 'M973 ' + (r[1] + .5) + 'H977', stroke: LINE, fill: 'none' });
    el(macd, 'text', { x: 1017, y: r[1] + 4, fill: RED, 'text-anchor': 'end' }, r[0]);
  });
})();

// ---- 红箭头 ----
function arrow(x1, y1, x2, y2, w, hw, hl) {
  const len = Math.hypot(x2 - x1, y2 - y1);
  const ux = (x2 - x1) / len, uy = (y2 - y1) / len;
  const nx = -uy, ny = ux;
  const bx = x2 - ux * hl, by = y2 - uy * hl;
  const sx = x2 - ux * hl * .8, sy = y2 - uy * hl * .8;
  const pts = [
    [x1, y1],
    [sx + nx * w / 2, sy + ny * w / 2],
    [bx + nx * hw / 2, by + ny * hw / 2],
    [x2, y2],
    [bx - nx * hw / 2, by - ny * hw / 2],
    [sx - nx * w / 2, sy - ny * w / 2]
  ];
  el(document.getElementById('marks'), 'polygon', {
    points: pts.map(p => p[0].toFixed(1) + ',' + p[1].toFixed(1)).join(' '),
    fill: '#f23c3c'
  });
}
arrow(933, 518, 953, 418, 10, 16, 24);
arrow(955, 420, 993, 514, 10, 16, 24);
arrow(995, 512, 1043, 431, 10, 16, 24);
arrow(1046, 433, 1085, 522, 10, 16, 24);
arrow(1095, 524, 1140, 439, 10, 16, 24);
arrow(1142, 441, 1183, 581, 10, 16, 26);
arrow(1186, 578, 1271, 338, 13, 22, 32);
```
